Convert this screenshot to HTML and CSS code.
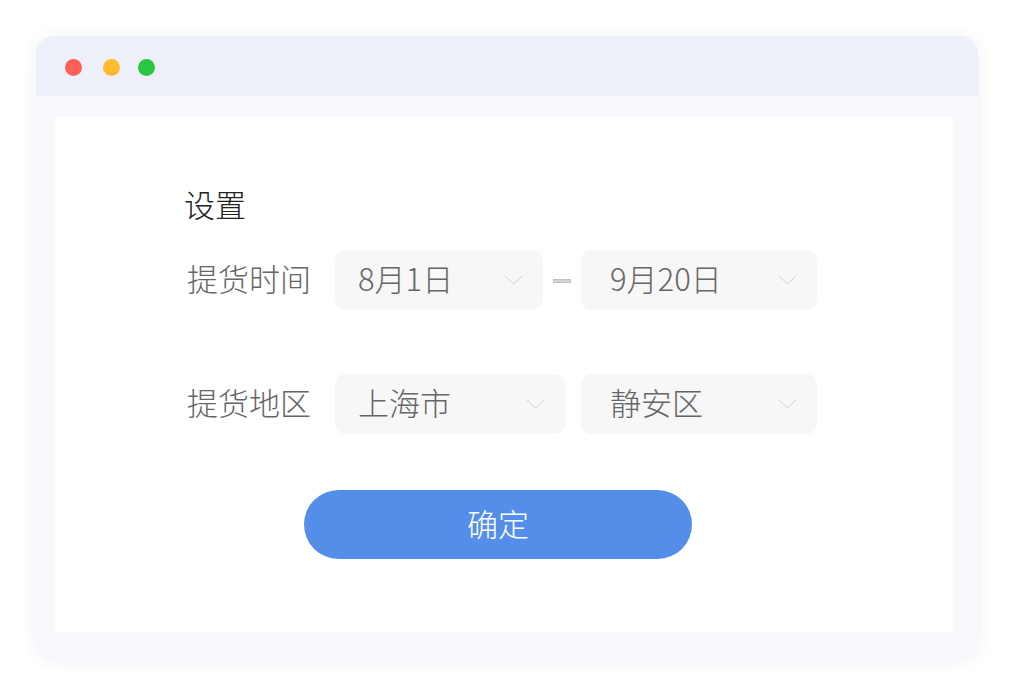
FILE: index.html
```html
<!DOCTYPE html>
<html lang="zh-CN">
<head>
    <meta charset="UTF-8">
    <meta name="viewport" content="width=device-width, initial-scale=1.0">
    <title>设置</title>
    <link rel="stylesheet" href="styles.css">
</head>
<body>
    <div class="window">
        <div class="titlebar">
            <span class="dot dot-red"></span>
            <span class="dot dot-yellow"></span>
            <span class="dot dot-green"></span>
        </div>
        <div class="window-body">
            <div class="panel">
                <h2 class="title">设置</h2>

                <div class="row row-time">
                    <span class="label">提货时间</span>
                    <div class="select select-start">
                        <span>8月1日</span>
                        <svg class="chevron" width="19" height="10" viewBox="0 0 19 10"><path d="M0.5 0.5 L9.5 9 L18.5 0.5" fill="none" stroke="#cfcfcf" stroke-width="1"/></svg>
                    </div>
                    <span class="dash"></span>
                    <div class="select select-wide">
                        <span>9月20日</span>
                        <svg class="chevron" width="19" height="10" viewBox="0 0 19 10"><path d="M0.5 0.5 L9.5 9 L18.5 0.5" fill="none" stroke="#cfcfcf" stroke-width="1"/></svg>
                    </div>
                </div>

                <div class="row row-area">
                    <span class="label">提货地区</span>
                    <div class="select select-city">
                        <span>上海市</span>
                        <svg class="chevron" width="19" height="10" viewBox="0 0 19 10"><path d="M0.5 0.5 L9.5 9 L18.5 0.5" fill="none" stroke="#cfcfcf" stroke-width="1"/></svg>
                    </div>
                    <div class="select select-wide">
                        <span>静安区</span>
                        <svg class="chevron" width="19" height="10" viewBox="0 0 19 10"><path d="M0.5 0.5 L9.5 9 L18.5 0.5" fill="none" stroke="#cfcfcf" stroke-width="1"/></svg>
                    </div>
                </div>

                <button class="confirm">确定</button>
            </div>
        </div>
    </div>
</body>
</html>
```

FILE: styles.css
```css
body {
    margin: 0;
    padding: 36px;
    background: #ffffff;
    font-family: "Noto Sans CJK SC", "Noto Sans", sans-serif;
    font-weight: 300;
}
.window {
    width: 942px;
    border-radius: 18px;
    background: #f8f9fc;
    box-shadow: 0 2px 18px rgba(40, 60, 120, 0.07);
    overflow: hidden;
}
.titlebar {
    height: 60px;
    box-sizing: border-box;
    padding: 2px 0 0 29px;
    background: #edf0f9;
    display: flex;
    align-items: center;
}
.dot {
    width: 17px;
    height: 17px;
    border-radius: 50%;
}
.dot-red {
    background: #ff5f57;
}
.dot-yellow {
    background: #ffbb2d;
    margin-left: 21px;
}
.dot-green {
    background: #29c73f;
    margin-left: 18px;
}
.window-body {
    padding: 21px 25px 26px 19px;
}
.panel {
    background: #ffffff;
    height: 447px;
    padding: 68px 0 0 129px;
}
.title {
    margin: 0;
    font-size: 31px;
    font-weight: 300;
    line-height: 38px;
    color: #222222;
}
.row {
    display: flex;
    align-items: center;
}
.row-time {
    margin-top: 27px;
}
.row-area {
    margin-top: 64px;
}
.label {
    font-size: 31px;
    color: #666666;
    margin: 0 24px 6px 3px;
}
.select {
    height: 60px;
    box-sizing: border-box;
    background: #f7f7f7;
    border-radius: 10px;
    display: flex;
    align-items: center;
    justify-content: space-between;
    padding: 0 20px 0 23px;
    font-size: 31px;
    color: #666666;
}
.select span {
    margin-bottom: 6px;
}
.select-start {
    width: 208px;
}
.select-city {
    width: 230px;
    margin-right: 16px;
}
.select-wide {
    width: 236px;
    padding-left: 29px;
}
.chevron {
    display: block;
}
.dash {
    width: 18px;
    height: 4px;
    box-sizing: border-box;
    background: #d6d6d6;
    border: 1px solid #c2c2c2;
    margin: 2px 10px 0 10px;
}
.confirm {
    display: block;
    margin: 56px 0 0 120px;
    padding: 0 0 5px;
    width: 388px;
    height: 69px;
    border: none;
    border-radius: 35px;
    background: #558ee9;
    color: #ffffff;
    font-family: "Noto Sans CJK SC", sans-serif;
    font-weight: 300;
    font-size: 31px;
    cursor: pointer;
}
```
